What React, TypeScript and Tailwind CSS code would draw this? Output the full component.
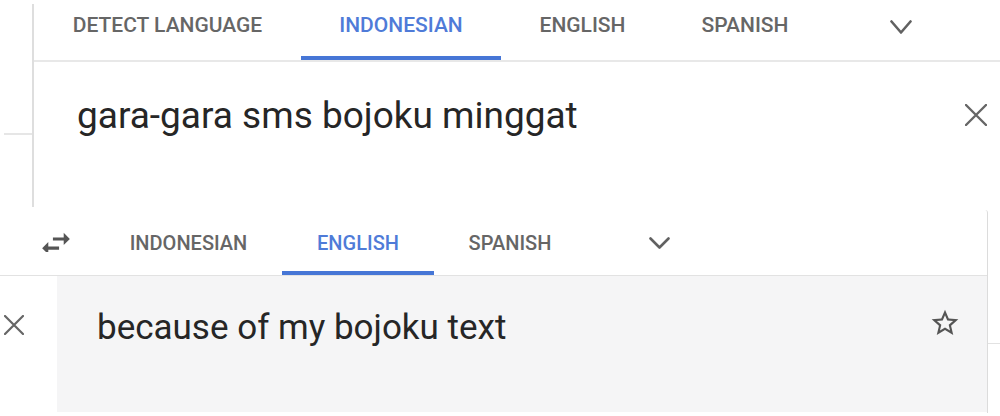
import React from "react";

const Chevron = ({ w, h }: { w: number; h: number }) => (
  <svg width={w} height={h} viewBox={`0 0 ${w} ${h}`} fill="none">
    <polyline
      points={`1.5,1.5 ${w / 2},${h - 1.5} ${w - 1.5},1.5`}
      stroke="#616161"
      strokeWidth="2.6"
      strokeLinecap="round"
      strokeLinejoin="round"
    />
  </svg>
);

const Close = ({ s, sw }: { s: number; sw: number }) => (
  <svg width={s} height={s} viewBox={`0 0 ${s} ${s}`} fill="none">
    <path
      d={`M1 1L${s - 1} ${s - 1}M${s - 1} 1L1 ${s - 1}`}
      stroke="#666"
      strokeWidth={sw}
      strokeLinecap="round"
    />
  </svg>
);

const Swap = () => (
  <svg width="28" height="20" viewBox="3 4.5 18 13" fill="#555">
    <path d="M6.99 11L3 15l3.99 4v-3H14v-2H6.99v-3zM21 9l-3.99-4v3H10v2h7.01v3L21 9z" />
  </svg>
);

const Star = () => (
  <svg width="32" height="32" viewBox="0 0 24 24" fill="#555555">
    <path d="M22 9.24l-7.19-.62L12 2 9.19 8.63 2 9.24l5.46 4.73L5.82 21 12 17.27 18.18 21l-1.63-7.03L22 9.24zM12 15.4l-3.76 2.27 1-4.28-3.32-2.88 4.38-.38L12 6.1l1.71 4.04 4.38.38-3.32 2.88 1 4.28L12 15.4z" />
  </svg>
);

function TopTab({ label, w, active }: { label: string; w: string; active?: boolean }) {
  return (
    <div className={`${w} flex flex-col h-full`}>
      <div
        className={`flex-1 flex justify-center pt-[9px] text-[21px] leading-[24px] font-medium ${
          active ? "text-[#4f7bd8]" : "text-[#666666]"
        }`}
      >
        {label}
      </div>
      <div className={`h-[4px] ${active ? "bg-[#4676d6]" : ""}`} />
    </div>
  );
}

function BottomTab({ label, w, active }: { label: string; w: string; active?: boolean }) {
  return (
    <div className={`${w} flex flex-col h-full`}>
      <div
        className={`flex-1 flex justify-center pt-[21px] text-[20px] leading-[24px] font-medium ${
          active ? "text-[#4f7bd8]" : "text-[#666666]"
        }`}
      >
        {label}
      </div>
      <div className={`h-[4px] ${active ? "bg-[#4676d6]" : ""}`} />
    </div>
  );
}

export default function App() {
  return (
    <div className="w-[1000px] h-[416px] bg-white overflow-hidden flex flex-col font-['Roboto',sans-serif]">
      {/* top row */}
      <div className="flex h-[207px]">
        <div className="w-[32px] flex flex-col">
          <div className="h-[133px]" />
          <div className="ml-[4px] h-[2px] bg-[#e6e6e6]" />
        </div>
        <div className="flex-1 mt-[4px] border-l-2 border-[#dedede] flex flex-col">
          <div className="h-[58px] border-b-2 border-[#e8e8e8] flex">
            <TopTab label="DETECT LANGUAGE" w="w-[267px]" />
            <TopTab label="INDONESIAN" w="w-[200px]" active />
            <TopTab label="ENGLISH" w="w-[163px]" />
            <TopTab label="SPANISH" w="w-[162px]" />
            <div className="w-[150px] flex justify-center pt-[16px]">
              <Chevron w={22} h={14} />
            </div>
          </div>
          <div className="flex-1 flex justify-between">
            <div className="pl-[43px] pt-[32px] text-[37px] leading-[44px] text-[#262626]">
              gara-gara sms bojoku minggat
            </div>
            <div className="pt-[42px] pr-[13px]">
              <Close s={22} sw={2.4} />
            </div>
          </div>
        </div>
      </div>
      {/* bottom row */}
      <div className="mt-[3px] flex h-[203px]">
        <div className="w-[988px] border-r border-[#dcdcdc] rounded-tr-[3px] flex flex-col">
          <div className="h-[66px] border-b border-[#e2e2e2] flex">
            <div className="w-[95px] pl-[42px] pt-[22px]">
              <Swap />
            </div>
            <BottomTab label="INDONESIAN" w="w-[187px]" />
            <BottomTab label="ENGLISH" w="w-[152px]" active />
            <BottomTab label="SPANISH" w="w-[152px]" />
            <div className="w-[146px] flex justify-center pt-[27px]">
              <Chevron w={21} h={12} />
            </div>
          </div>
          <div className="h-[136px] flex">
            <div className="w-[57px] pl-[4px] pt-[39px]">
              <Close s={20} sw={2.2} />
            </div>
            <div className="flex-1 bg-[#f5f5f6] flex justify-between">
              <div className="pl-[40px] pt-[32px] text-[35px] leading-[40px] text-[#262626]">
                because of my bojoku text
              </div>
              <div className="pt-[31px] pr-[26px]">
                <Star />
              </div>
            </div>
          </div>
        </div>
        <div className="flex-1 flex flex-col">
          <div className="h-[133px]" />
          <div className="h-px bg-[#e2e2e2]" />
        </div>
      </div>
    </div>
  );
}
